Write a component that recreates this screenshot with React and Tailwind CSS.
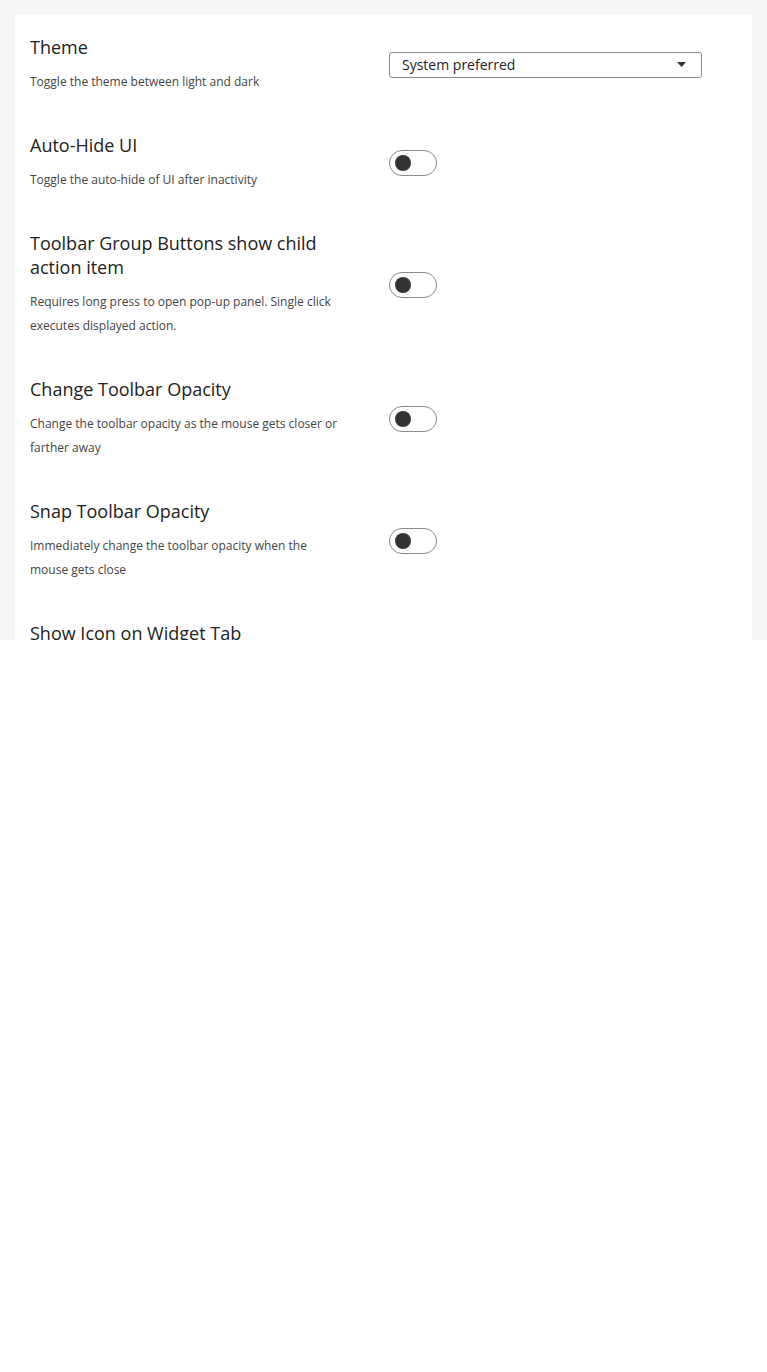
import React, { useState } from "react";

const settings = [
  { title: "Theme", desc: "Toggle the theme between light and dark", control: "select" },
  { title: "Auto-Hide UI", desc: "Toggle the auto-hide of UI after inactivity" },
  {
    title: "Toolbar Group Buttons show child action item",
    desc: "Requires long press to open pop-up panel. Single click executes displayed action.",
  },
  {
    title: "Change Toolbar Opacity",
    desc: "Change the toolbar opacity as the mouse gets closer or farther away",
  },
  {
    title: "Snap Toolbar Opacity",
    desc: "Immediately change the toolbar opacity when the mouse gets close",
  },
  {
    title: "Show Icon on Widget Tab",
    desc: "Display the widget's icon next to its title on the widget tab",
  },
];

const Toggle = () => {
  const [on, setOn] = useState(false);
  return (
    <button
      onClick={() => setOn(!on)}
      className="relative block w-[48px] h-[26px] rounded-full border border-[#8a8a8a] bg-white"
    >
      <span
        className={`absolute top-[4px] w-[16px] h-[16px] rounded-full bg-[#333333] ${
          on ? "left-[26px]" : "left-[5px]"
        }`}
      />
    </button>
  );
};

const Select = () => (
  <div className="w-[313px] h-[26px] flex items-center justify-between border border-[#8a8a8a] rounded-[3px] pl-[12px] pr-[15px] text-[14px] text-[#222]">
    <span>System preferred</span>
    <svg width="9" height="5" viewBox="0 0 9 5">
      <path d="M0 0h9L4.5 5z" fill="#333" />
    </svg>
  </div>
);

export default function App() {
  return (
    <div
      className="h-[640px] overflow-hidden bg-[#f5f7f6] pt-[15px] px-[15px]"
      style={{ fontFamily: "'Open Sans', sans-serif" }}
    >
      <div className="bg-white rounded-t-[4px] pt-[20px] px-[15px] min-h-full">
        {settings.map((s) => (
          <div key={s.title} className="flex items-center mb-[39px]">
            <div className="w-[312px]">
              <h3 className="text-[18px] leading-[24px] text-[#222]">{s.title}</h3>
              <p className="mt-[11px] text-[12px] leading-[24px] text-[#444]">{s.desc}</p>
            </div>
            <div className="ml-[47px] flex">
              {s.control === "select" ? <Select /> : <Toggle />}
            </div>
          </div>
        ))}
      </div>
    </div>
  );
}
